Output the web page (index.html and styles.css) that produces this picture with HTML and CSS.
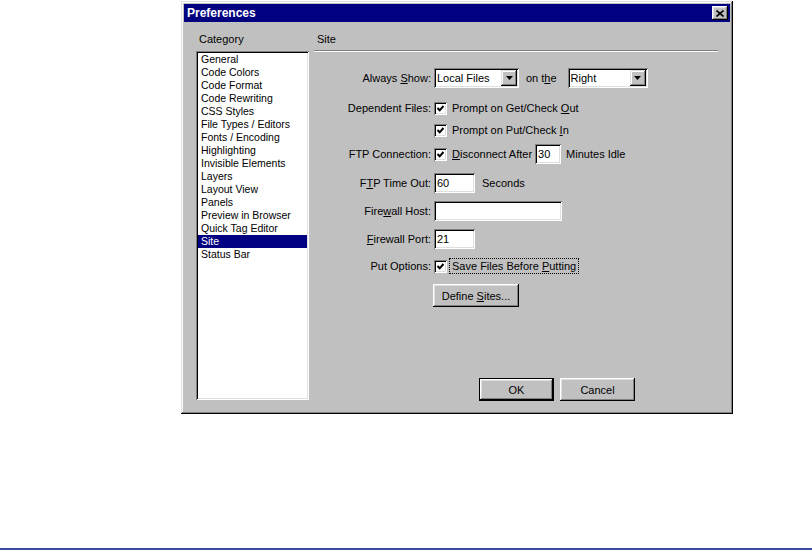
FILE: index.html
```html
<!DOCTYPE html>
<html lang="en">
<head>
    <meta charset="UTF-8">
    <title>Preferences</title>
    <link rel="stylesheet" href="styles.css">
</head>
<body>
    <div class="dialog">
        <div class="title-bar">
            <span class="title">Preferences</span>
            <button class="close-btn">
                <svg width="8" height="7" viewBox="0 0 8 7"><path d="M0.5 0.5 L7.5 6.5 M7.5 0.5 L0.5 6.5" stroke="#000" stroke-width="1.6"/></svg>
            </button>
        </div>

        <div class="dialog-body">
            <div class="category-col">
                <div class="group-label">Category</div>
                <ul class="category-list">
                    <li>General</li>
                    <li>Code Colors</li>
                    <li>Code Format</li>
                    <li>Code Rewriting</li>
                    <li>CSS Styles</li>
                    <li>File Types / Editors</li>
                    <li>Fonts / Encoding</li>
                    <li>Highlighting</li>
                    <li>Invisible Elements</li>
                    <li>Layers</li>
                    <li>Layout View</li>
                    <li>Panels</li>
                    <li>Preview in Browser</li>
                    <li>Quick Tag Editor</li>
                    <li class="selected">Site</li>
                    <li>Status Bar</li>
                </ul>
            </div>

            <div class="panel">
                <div class="group-label panel-title">Site</div>
                <div class="etched"></div>

                <div class="form-grid">
                    <div class="field-label">Always <u>S</u>how:</div>
                    <div class="field">
                        <div class="select select-files">
                            <span class="select-text">Local Files</span>
                            <span class="drop-btn"><svg width="7" height="4" viewBox="0 0 7 4"><polygon points="0,0 7,0 3.5,4" fill="#000"/></svg></span>
                        </div>
                        <span class="on-the">on t<u>h</u>e</span>
                        <div class="select select-side">
                            <span class="select-text">Right</span>
                            <span class="drop-btn"><svg width="7" height="4" viewBox="0 0 7 4"><polygon points="0,0 7,0 3.5,4" fill="#000"/></svg></span>
                        </div>
                    </div>

                    <div class="field-label">Dependent Files:</div>
                    <div class="field">
                        <span class="checkbox"><svg width="7" height="7" viewBox="0 0 7 7"><path d="M0.5 3 L2.7 5.3 L6.5 1" stroke="#000" stroke-width="2" fill="none"/></svg></span>
                        <span class="check-text">Prompt on Get/Check <u>O</u>ut</span>
                    </div>

                    <div class="field-label"></div>
                    <div class="field">
                        <span class="checkbox"><svg width="7" height="7" viewBox="0 0 7 7"><path d="M0.5 3 L2.7 5.3 L6.5 1" stroke="#000" stroke-width="2" fill="none"/></svg></span>
                        <span class="check-text">Prompt on Put/Check <u>I</u>n</span>
                    </div>

                    <div class="field-label">FTP Connection:</div>
                    <div class="field">
                        <span class="checkbox"><svg width="7" height="7" viewBox="0 0 7 7"><path d="M0.5 3 L2.7 5.3 L6.5 1" stroke="#000" stroke-width="2" fill="none"/></svg></span>
                        <span class="check-text"><u>D</u>isconnect After</span>
                        <span class="text-input input-minutes">30</span>
                        <span class="after-text">Minutes Idle</span>
                    </div>

                    <div class="field-label">F<u>T</u>P Time Out:</div>
                    <div class="field">
                        <span class="text-input input-short">60</span>
                        <span class="after-text seconds">Seconds</span>
                    </div>

                    <div class="field-label">Fire<u>w</u>all Host:</div>
                    <div class="field">
                        <span class="text-input input-host"></span>
                    </div>

                    <div class="field-label"><u>F</u>irewall Port:</div>
                    <div class="field">
                        <span class="text-input input-short">21</span>
                    </div>

                    <div class="field-label">Put Options:</div>
                    <div class="field">
                        <span class="checkbox"><svg width="7" height="7" viewBox="0 0 7 7"><path d="M0.5 3 L2.7 5.3 L6.5 1" stroke="#000" stroke-width="2" fill="none"/></svg></span>
                        <span class="check-text focused">Save Files Before <u>P</u>utting</span>
                    </div>

                    <div class="field-label"></div>
                    <div class="field">
                        <button class="win-btn define-btn">Define <u>S</u>ites...</button>
                    </div>
                </div>

                <div class="dialog-buttons">
                    <button class="win-btn default-btn">OK</button>
                    <button class="win-btn">Cancel</button>
                </div>
            </div>
        </div>
    </div>

    <div class="page-rule"></div>
</body>
</html>
```

FILE: styles.css
```css
body {
    margin: 0;
    height: 550px;
    display: flex;
    flex-direction: column;
    background: #fff;
    font-family: "Liberation Sans", Arial, sans-serif;
    font-size: 11px;
    color: #000;
}

u {
    text-decoration: underline;
    text-underline-offset: 1px;
}

.dialog {
    margin: 1px 0 0 181px;
    width: 552px;
    height: 413px;
    box-sizing: border-box;
    padding: 3px;
    display: flex;
    flex-direction: column;
    background: #c0c0c0;
    box-shadow: inset -1px -1px #000, inset 1px 1px #dfdfdf,
                inset -2px -2px #808080, inset 2px 2px #fff;
}

.title-bar {
    height: 18px;
    background: #000080;
    display: flex;
    align-items: center;
    padding: 0 2px 0 3px;
}

.title {
    color: #fff;
    font-weight: bold;
    font-size: 12px;
    flex: 1;
}

.close-btn {
    width: 16px;
    height: 14px;
    padding: 0;
    border: none;
    background: #c0c0c0;
    display: flex;
    align-items: center;
    justify-content: center;
    box-shadow: inset -1px -1px #000, inset 1px 1px #fff,
                inset -2px -2px #808080, inset 2px 2px #dfdfdf;
}

.dialog-body {
    flex: 1;
    display: flex;
    padding: 11px 0 11px 12px;
}

.category-col {
    width: 113px;
    display: flex;
    flex-direction: column;
}

.group-label {
    height: 13px;
    line-height: 13px;
    padding-left: 3px;
}

.category-list {
    flex: 1;
    margin: 5px 0 0 0;
    padding: 2px;
    list-style: none;
    background: #fff;
    box-shadow: inset 1px 1px #808080, inset -1px -1px #fff,
                inset 2px 2px #000, inset -2px -2px #dfdfdf;
}

.category-list li {
    height: 13px;
    line-height: 13px;
    padding-left: 3px;
    font-size: 10.5px;
    white-space: nowrap;
}

.category-list li.selected {
    background: #000080;
    color: #fff;
}

.panel {
    width: 404px;
    margin-left: 5px;
    display: flex;
    flex-direction: column;
}

.etched {
    margin-top: 4px;
    height: 1px;
    background: #808080;
    border-bottom: 1px solid #fff;
}

.form-grid {
    margin-top: 16px;
    display: grid;
    grid-template-columns: 117px auto;
    grid-template-rows: 30px 22px 24px 29px 28px 28px 27px 28px 23px;
    column-gap: 3px;
}

.field-label {
    height: 20px;
    line-height: 20px;
    text-align: right;
    white-space: nowrap;
}

.field {
    height: 20px;
    display: flex;
    align-items: center;
    white-space: nowrap;
}

.select {
    height: 20px;
    box-sizing: border-box;
    padding: 2px;
    display: flex;
    align-items: center;
    background: #fff;
    box-shadow: inset 1px 1px #808080, inset -1px -1px #fff,
                inset 2px 2px #000, inset -2px -2px #dfdfdf;
}

.select-files {
    width: 85px;
}

.select-side {
    width: 80px;
}

.select-text {
    flex: 1;
    padding-left: 1px;
}

.drop-btn {
    width: 16px;
    height: 16px;
    background: #c0c0c0;
    display: flex;
    align-items: center;
    justify-content: center;
    box-shadow: inset -1px -1px #000, inset 1px 1px #dfdfdf,
                inset -2px -2px #808080, inset 2px 2px #fff;
}

.on-the {
    margin: 0 11px 0 7px;
}

.checkbox {
    width: 13px;
    height: 13px;
    box-sizing: border-box;
    display: flex;
    align-items: center;
    justify-content: center;
    background: #fff;
    box-shadow: inset 1px 1px #808080, inset -1px -1px #fff,
                inset 2px 2px #000, inset -2px -2px #dfdfdf;
}

.check-text {
    margin-left: 5px;
}

.check-text.focused {
    margin-left: 3px;
    padding: 1px 2px;
    outline: 1px dotted #000;
}

.text-input {
    height: 20px;
    box-sizing: border-box;
    padding: 2px 3px;
    line-height: 16px;
    background: #fff;
    box-shadow: inset 1px 1px #808080, inset -1px -1px #fff,
                inset 2px 2px #000, inset -2px -2px #dfdfdf;
}

.input-minutes {
    width: 26px;
    margin-left: 3px;
}

.input-short {
    width: 41px;
}

.input-host {
    width: 128px;
}

.after-text {
    margin-left: 5px;
}

.after-text.seconds {
    margin-left: 7px;
}

.win-btn {
    height: 23px;
    padding: 0;
    border: none;
    background: #c0c0c0;
    font-family: inherit;
    font-size: 11px;
    color: #000;
    box-shadow: inset -1px -1px #000, inset 1px 1px #fff,
                inset -2px -2px #808080, inset 2px 2px #dfdfdf;
}

.define-btn {
    width: 86px;
    margin-left: -1px;
    align-self: flex-start;
}

.dialog-buttons {
    margin-top: auto;
    margin-bottom: -1px;
    padding-left: 165px;
    display: flex;
    gap: 6px;
}

.dialog-buttons .win-btn {
    width: 75px;
}

.default-btn {
    box-shadow: inset 0 0 0 1px #000, inset -2px -2px #000, inset 2px 2px #fff,
                inset -3px -3px #808080, inset 3px 3px #dfdfdf;
}

.page-rule {
    margin-top: auto;
    height: 2px;
    background: #3a4a9e;
}
```
